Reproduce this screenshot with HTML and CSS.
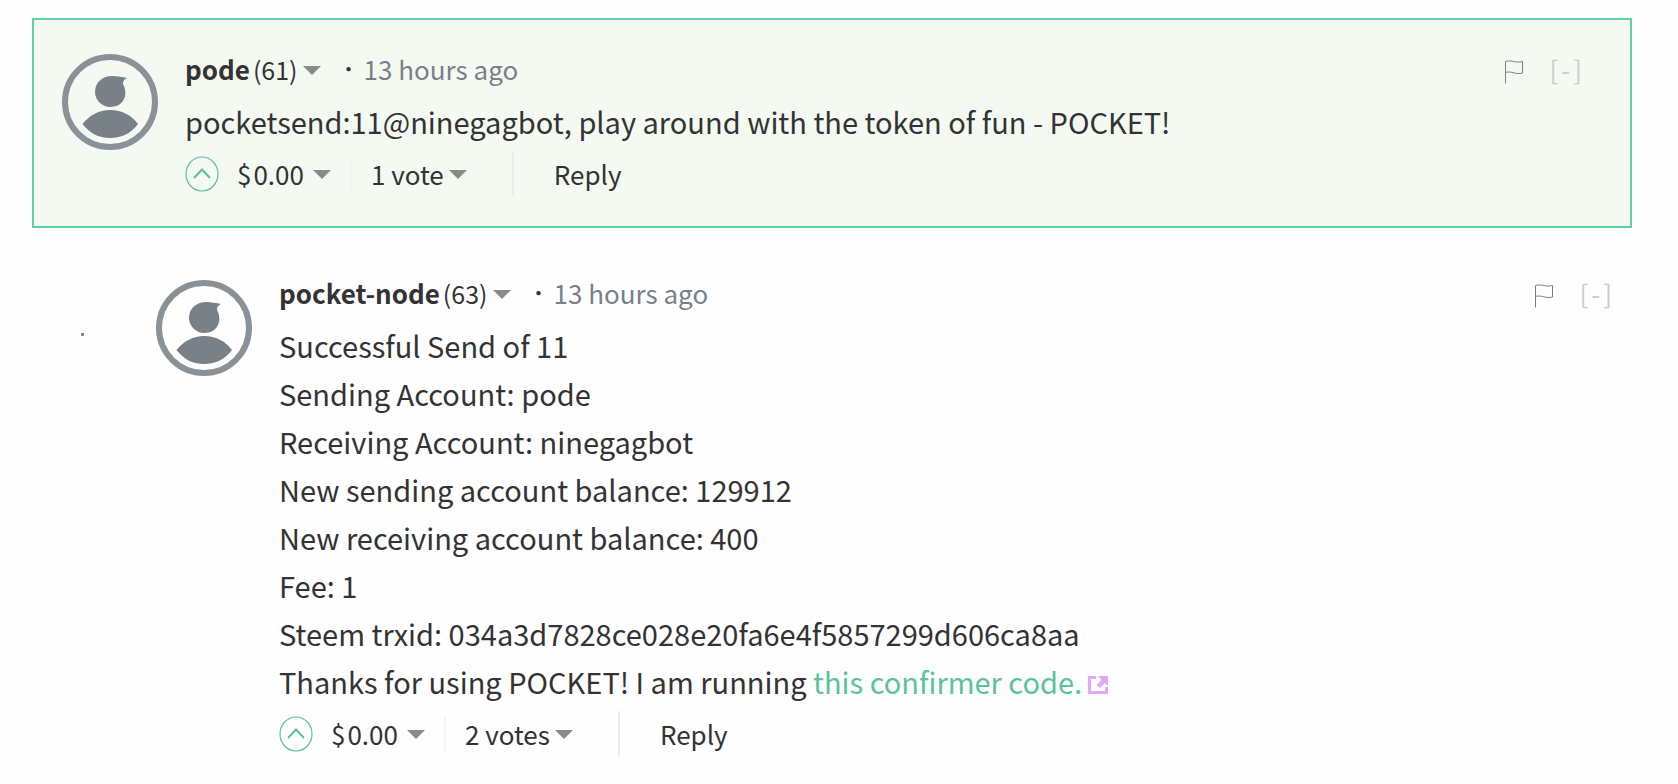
FILE: index.html
```html
<!DOCTYPE html>
<html lang="en">
<head>
  <meta charset="UTF-8" />
  <meta name="viewport" content="width=device-width, initial-scale=1.0"/>
  <title>Comments</title>
  <link rel="stylesheet" href="styles.css">
</head>
<body>

  <svg class="sprite" aria-hidden="true">
    <symbol id="avatar" viewBox="0 0 96 96">
      <circle cx="48" cy="48" r="45" fill="none" stroke="#8a9297" stroke-width="6"/>
      <path d="M65 24 C61 26 60 29 62 32 C66 42 61 53 48 53 C40 53 33 46 33 38 C33 28 41 22 50 22 C56 22 60 23 65 24 Z" fill="#788187"/>
      <path d="M20.500 70 C28 61 37 56 48 56 C60 56 69 61 76 70 C69 79 60 84 48 84 C36 84 28 79 20.500 70 Z" fill="#788187"/>
    </symbol>
    <symbol id="flag" viewBox="0 0 20 24">
      <path d="M1.500 23.500 V1.500 C7 -0.500 12 3.500 18.500 1.500 V13 C12 15 7 10.500 1.500 12.500" fill="none" stroke="#7d7d7d" stroke-width="1"/>
    </symbol>
    <symbol id="upvote" viewBox="0 0 34 36">
      <ellipse cx="17" cy="18" rx="16" ry="17" fill="none" stroke="#5cc29c" stroke-width="1.200"/>
      <path d="M9 22 L17 13.500 L25 22" fill="none" stroke="#5cc29c" stroke-width="2"/>
    </symbol>
    <symbol id="external" viewBox="0 0 20 18">
      <path d="M0 0 H8 V3 H3 V15 H17 V11 H20 V18 H0 Z M10 0 H20 V10 L17 7 L12 12 L8.500 9 L13.500 4 Z" fill="#dfa9f7"/>
    </symbol>
  </svg>

  <main class="comments">

    <article class="comment highlighted">
      <svg class="avatar" role="img" aria-label="pode"><use href="#avatar"/></svg>
      <div class="comment-main">
        <header class="comment-header">
          <a class="author" href="#"><strong>pode</strong><span class="reputation">(61)</span><span class="caret"></span></a>
          <span class="dot">·</span>
          <a class="time" href="#">13 hours ago</a>
          <div class="controls">
            <button class="flag" aria-label="Flag"><svg><use href="#flag"/></svg></button>
            <button class="collapse">[<span>-</span>]</button>
          </div>
        </header>
        <div class="comment-body">
          <p>pocketsend:11@ninegagbot, play around with the token of fun - POCKET!</p>
        </div>
        <footer class="comment-footer">
          <button class="upvote" aria-label="Upvote"><svg><use href="#upvote"/></svg></button>
          <button class="payout"><span class="currency">$</span>0.00<span class="caret"></span></button>
          <button class="votes">1 vote<span class="caret"></span></button>
          <button class="reply">Reply</button>
        </footer>
      </div>
    </article>

    <div class="replies">
      <span class="thread-dot"></span>
      <article class="comment">
        <svg class="avatar" role="img" aria-label="pocket-node"><use href="#avatar"/></svg>
        <div class="comment-main">
          <header class="comment-header">
            <a class="author" href="#"><strong>pocket-node</strong><span class="reputation">(63)</span><span class="caret"></span></a>
            <span class="dot">·</span>
            <a class="time" href="#">13 hours ago</a>
            <div class="controls">
              <button class="flag" aria-label="Flag"><svg><use href="#flag"/></svg></button>
              <button class="collapse">[<span>-</span>]</button>
            </div>
          </header>
          <div class="comment-body">
            <p>
              Successful Send of 11<br>
              Sending Account: pode<br>
              Receiving Account: ninegagbot<br>
              New sending account balance: 129912<br>
              New receiving account balance: 400<br>
              Fee: 1<br>
              Steem trxid: 034a3d7828ce028e20fa6e4f5857299d606ca8aa<br>
              Thanks for using POCKET! I am running <a class="link" href="#">this confirmer code.<svg class="external"><use href="#external"/></svg></a>
            </p>
          </div>
          <footer class="comment-footer">
            <button class="upvote" aria-label="Upvote"><svg><use href="#upvote"/></svg></button>
            <button class="payout"><span class="currency">$</span>0.00<span class="caret"></span></button>
            <button class="votes">2 votes<span class="caret"></span></button>
            <button class="reply">Reply</button>
          </footer>
        </div>
      </article>
    </div>

  </main>

</body>
</html>
```
FILE: styles.css
```css
* {
  margin: 0;
  padding: 0;
  box-sizing: border-box;
}

body {
  background-color: #fefefe;
  color: #333;
  font-family: 'Noto Sans CJK SC', 'Open Sans', sans-serif;
  font-size: 26px;
  line-height: 36px;
}

a {
  color: inherit;
  text-decoration: none;
}

button {
  background: none;
  border: none;
  color: inherit;
  font: inherit;
  cursor: pointer;
}

.sprite {
  display: none;
}

.comments {
  padding: 18px 46px 0 32px;
}

.comment {
  display: flex;
  align-items: flex-start;
  gap: 27px;
}

.highlighted {
  padding: 31px 48px 29px 28px;
  background-color: #f4f9f2;
  border: 2px solid #60d0a8;
}

.avatar {
  flex: none;
  width: 96px;
  height: 96px;
  margin-top: 3px;
}

.comment-main {
  flex: 1;
  min-width: 0;
}

.comment-header {
  display: flex;
  align-items: center;
}

.author {
  display: flex;
  align-items: center;
}

.reputation {
  margin-left: 3px;
  font-size: 25px;
}

.caret {
  display: inline-block;
  border: 9px solid transparent;
  border-top-color: #8a8a8a;
  border-bottom: none;
}

.author .caret {
  margin: 3px 0 0 5px;
}

.dot {
  margin: 0 5px 0 18px;
  font-size: 20px;
}

.time {
  color: #788187;
}

.controls {
  display: flex;
  align-items: center;
  gap: 25px;
  margin-left: auto;
}

.flag svg {
  display: block;
  width: 20px;
  height: 24px;
  margin-top: 6px;
}

.collapse {
  color: #ccc;
}

.collapse span {
  margin: 0 3px;
}

.comment-body {
  padding-top: 10px;
  font-size: 29px;
  line-height: 48px;
}

.link {
  color: #5cc29c;
}

.external {
  width: 20px;
  height: 18px;
  margin-left: 6px;
}

.comment-footer {
  display: flex;
  align-items: center;
  padding-top: 6px;
}

.upvote svg {
  display: block;
  width: 34px;
  height: 36px;
}

.payout,
.votes {
  display: flex;
  align-items: center;
}

.payout {
  margin-left: 18px;
}

.currency {
  margin-right: 2px;
}

.payout .caret {
  margin-left: 9px;
}

.votes {
  margin-left: 19px;
  padding-left: 19px;
  border-left: 2px solid #f4f4f4;
}

.votes .caret {
  margin-left: 5px;
}

.reply {
  margin-left: 45px;
  padding: 5px 0 5px 40px;
  border-left: 2px solid #ececec;
}

.replies {
  display: flex;
  align-items: flex-start;
  padding: 47px 20px 0 49px;
}

.thread-dot {
  width: 3px;
  height: 3px;
  margin: 58px 72px 0 0;
  background-color: #8a8a8a;
}

.replies .comment {
  flex: 1;
}

.replies .avatar {
  margin-top: 5px;
}
```
